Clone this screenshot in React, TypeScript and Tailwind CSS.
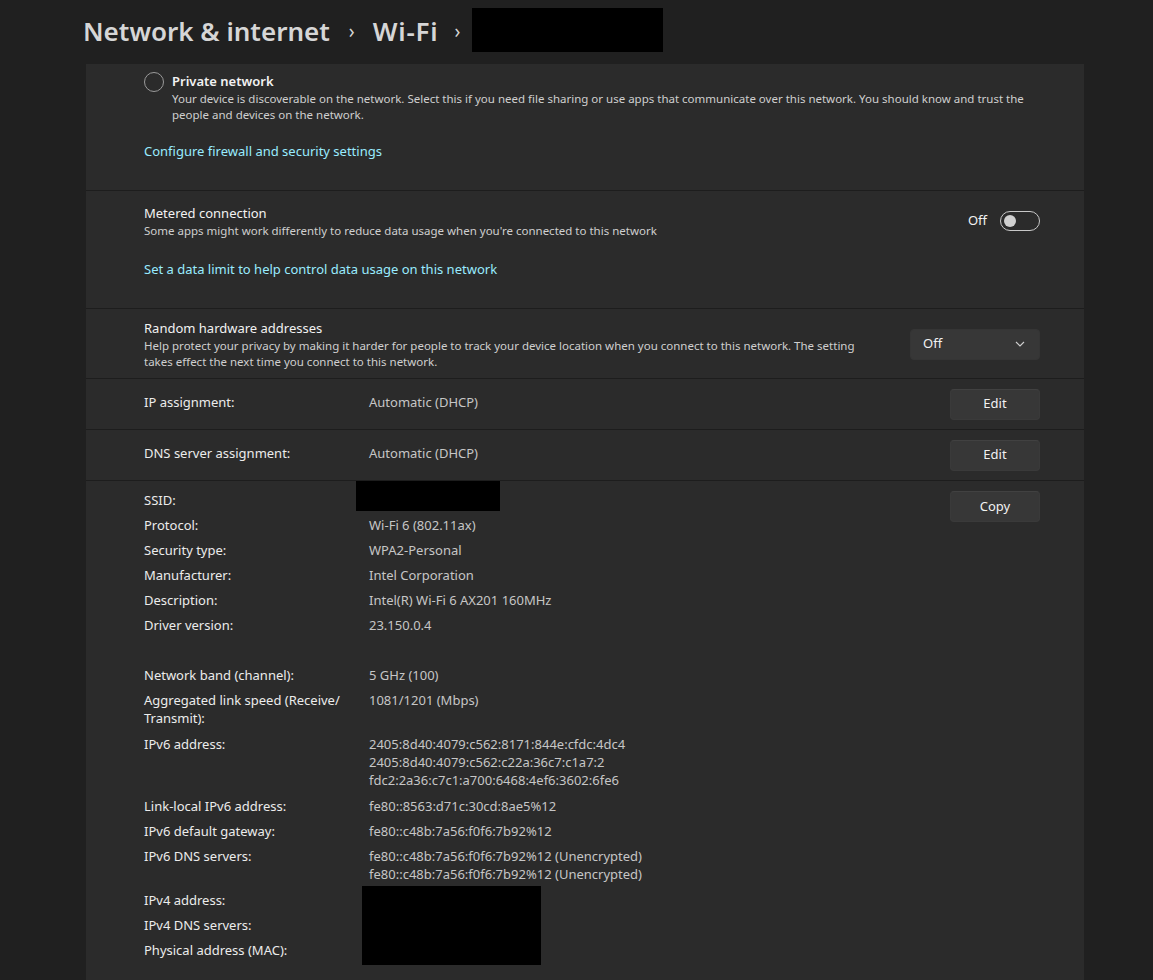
import type { ReactNode } from "react";

const font = { fontFamily: '"Noto Sans", "Open Sans", sans-serif' };

function Button({ children }: { children: ReactNode }) {
  return (
    <button className="flex h-[31px] w-[90px] items-center justify-center rounded-[4px] border border-[#3a3a3a] border-t-[#414141] bg-[#373737] text-[13px] text-[#f2f2f2]">
      {children}
    </button>
  );
}

function Toggle() {
  return (
    <div className="flex items-center gap-[13px]">
      <span className="text-[13px] text-[#f2f2f2]">Off</span>
      <div className="flex h-[20px] w-[40px] items-center rounded-full border border-[#c8c8c8] px-[3px]">
        <div className="h-[12px] w-[12px] rounded-full bg-[#d0d0d0]" />
      </div>
    </div>
  );
}

function Detail({ label, children, className = "" }: { label: ReactNode; children?: ReactNode; className?: string }) {
  return (
    <div className={`flex text-[13px] leading-[18px] ${className}`}>
      <div className="w-[225px] shrink-0 text-[#ececec]">{label}</div>
      <div className="text-[#c6c6c6]">{children}</div>
    </div>
  );
}

export default function App() {
  return (
    <div className="min-h-[980px] bg-[#202020] pl-[83px] pr-[69px]" style={font}>
      <header className="flex h-[62px] items-center text-[#d6d6d6]">
        <h1 className="text-[26px] font-semibold">Network &amp; internet</h1>
        <span className="ml-[19px] text-[19px]">›</span>
        <h1 className="ml-[18px] text-[26px] font-semibold tracking-[0.8px]">Wi-Fi</h1>
        <span className="ml-[16px] text-[19px]">›</span>
        <div className="ml-[12px] mt-[-2px] h-[44px] w-[191px] bg-black" />
      </header>

      <main className="ml-[3px] mt-[2px] bg-[#2b2b2b]">
        {/* network profile */}
        <section className="pb-[29px] pl-[58px] pr-[44px] pt-[7px]">
          <div className="flex gap-[8px]">
            <div className="mt-[1px] h-[20px] w-[20px] shrink-0 rounded-full border border-[#9a9a9a]" />
            <div>
              <p className="text-[13px] font-semibold leading-[20px] text-[#f2f2f2]">Private network</p>
              <p className="text-[11.5px] leading-[16px] text-[#cfcfcf]">
                Your device is discoverable on the network. Select this if you need file sharing or use apps that communicate over this network. You should know and trust the
                <br />
                people and devices on the network.
              </p>
            </div>
          </div>
          <p className="mt-[18px] text-[13px] leading-[20px] text-[#99ebff]">Configure firewall and security settings</p>
        </section>

        <section className="flex items-start justify-between border-t border-[#1d1d1d] pb-[29px] pl-[58px] pr-[44px] pt-[12px]">
          <div>
            <p className="text-[13px] leading-[20px] text-[#f2f2f2]">Metered connection</p>
            <p className="text-[11.5px] leading-[16px] text-[#cfcfcf]">Some apps might work differently to reduce data usage when you're connected to this network</p>
            <p className="mt-[20px] text-[13px] leading-[20px] text-[#99ebff]">Set a data limit to help control data usage on this network</p>
          </div>
          <div className="pt-[8px]">
            <Toggle />
          </div>
        </section>

        <section className="flex items-center justify-between border-t border-[#1d1d1d] pb-[8px] pl-[58px] pr-[44px] pt-[9px]">
          <div>
            <p className="text-[13px] leading-[20px] text-[#f2f2f2]">Random hardware addresses</p>
            <p className="text-[11.5px] leading-[16px] text-[#cfcfcf]">
              Help protect your privacy by making it harder for people to track your device location when you connect to this network. The setting
              <br />
              takes effect the next time you connect to this network.
            </p>
          </div>
          <div className="flex h-[31px] w-[130px] items-center justify-between rounded-[4px] border border-[#353535] bg-[#373737] pl-[12px] pr-[14px] text-[13px] text-[#f2f2f2]">
            <span>Off</span>
            <svg width="10" height="6" viewBox="0 0 10 6" fill="none" stroke="#d0d0d0" strokeWidth="1.1">
              <path d="M1 1l4 4 4-4" />
            </svg>
          </div>
        </section>

        <section className="flex h-[51px] items-center justify-between border-t border-[#1d1d1d] pl-[58px] pr-[44px]">
          <Detail label="IP assignment:" className="-mt-[4px]">Automatic (DHCP)</Detail>
          <Button>Edit</Button>
        </section>

        <section className="flex h-[51px] items-center justify-between border-t border-[#1d1d1d] pl-[58px] pr-[44px]">
          <Detail label="DNS server assignment:" className="-mt-[4px]">Automatic (DHCP)</Detail>
          <Button>Edit</Button>
        </section>

        <section className="flex items-start justify-between border-t border-[#1d1d1d] pb-[30px] pl-[58px] pr-[44px] pt-[10px]">
          <div className="relative flex flex-col gap-[7px]">
            <Detail label="SSID:">&nbsp;</Detail>
            <Detail label="Protocol:">Wi-Fi 6 (802.11ax)</Detail>
            <Detail label="Security type:">WPA2-Personal</Detail>
            <Detail label="Manufacturer:">Intel Corporation</Detail>
            <Detail label="Description:">Intel(R) Wi-Fi 6 AX201 160MHz</Detail>
            <Detail label="Driver version:">23.150.0.4</Detail>
            <Detail label="">&nbsp;</Detail>
            <Detail label="Network band (channel):">5 GHz (100)</Detail>
            <Detail
              className="mb-[1px]"
              label={
                <>
                  Aggregated link speed (Receive/
                  <br />
                  Transmit):
                </>
              }
            >
              1081/1201 (Mbps)
            </Detail>
            <Detail label="IPv6 address:" className="mb-[1px]">
              2405:8d40:4079:c562:8171:844e:cfdc:4dc4
              <br />
              2405:8d40:4079:c562:c22a:36c7:c1a7:2
              <br />
              fdc2:2a36:c7c1:a700:6468:4ef6:3602:6fe6
            </Detail>
            <Detail label="Link-local IPv6 address:">fe80::8563:d71c:30cd:8ae5%12</Detail>
            <Detail label="IPv6 default gateway:">fe80::c48b:7a56:f0f6:7b92%12</Detail>
            <Detail label="IPv6 DNS servers:" className="mb-[1px]">
              fe80::c48b:7a56:f0f6:7b92%12 (Unencrypted)
              <br />
              fe80::c48b:7a56:f0f6:7b92%12 (Unencrypted)
            </Detail>
            <Detail label="IPv4 address:">&nbsp;</Detail>
            <Detail label="IPv4 DNS servers:">&nbsp;</Detail>
            <Detail label="Physical address (MAC):">&nbsp;</Detail>

            {/* redacted values */}
            <div className="absolute left-[212px] top-[-10px] h-[30px] w-[144px] bg-black" />
            <div className="absolute left-[218px] top-[395px] h-[79px] w-[179px] bg-black" />
          </div>
          <Button>Copy</Button>
        </section>
      </main>
    </div>
  );
}
